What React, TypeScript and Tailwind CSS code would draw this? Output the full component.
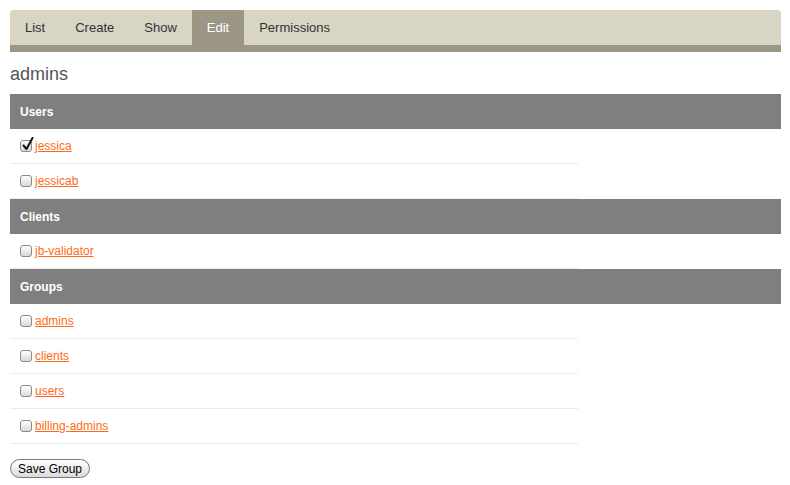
import React from 'react'

const tabs = ['List', 'Create', 'Show', 'Edit', 'Permissions']

const sections = [
  { title: 'Users', items: [{ name: 'jessica', checked: true }, { name: 'jessicab' }] },
  { title: 'Clients', items: [{ name: 'jb-validator' }] },
  {
    title: 'Groups',
    items: [{ name: 'admins' }, { name: 'clients' }, { name: 'users' }, { name: 'billing-admins' }],
  },
]

function Checkbox({ checked }: { checked?: boolean }) {
  return (
    <span className="relative inline-block w-[12px] h-[12px] mr-[3px] rounded-[3px] border border-[#8a8a8a] bg-gradient-to-b from-[#ffffff] to-[#d9d9d9] shadow-[inset_0_1px_0_#fff]">
      {checked && (
        <svg className="absolute -top-[4px] left-[1px]" width="12" height="14" viewBox="0 0 12 14">
          <path d="M1.5 8.5 L4.5 12 L10.5 1" fill="none" stroke="#111" strokeWidth="2" strokeLinecap="round" strokeLinejoin="round" />
        </svg>
      )}
    </span>
  )
}

export default function App() {
  return (
    <div className="bg-white w-[790px] h-[485px] pl-[10px] pr-[9px] pt-[10px] font-['Liberation_Sans',Arial,sans-serif] text-[#333]">
      {/* tab bar */}
      <div className="bg-[#d8d5c4] rounded-t-[4px] border-b-[7px] border-[#9b9784] flex h-[42px]">
        {tabs.map((t) => (
          <div
            key={t}
            className={
              t === 'Edit'
                ? 'px-[15px] h-[35px] flex items-center text-[13px] bg-[#9b9784] text-white'
                : 'px-[15px] h-[35px] flex items-center text-[13px] text-[#333]'
            }
          >
            {t}
          </div>
        ))}
      </div>

      <h2 className="text-[18px] leading-[22px] text-[#555] pt-[11px] pb-[9px]">admins</h2>

      {sections.map((s) => (
        <div key={s.title}>
          <div className="bg-[#7f7f7f] h-[35px] flex items-center px-[10px] text-white font-bold text-[12px]">
            {s.title}
          </div>
          {s.items.map((it) => (
            <div
              key={it.name}
              className="w-[568px] h-[35px] border-b border-[#ebebeb] flex items-center pl-[10px] text-[12px]"
            >
              <Checkbox checked={it.checked} />
              <a href="#" className="text-[#ff6a1a] underline">
                {it.name}
              </a>
            </div>
          ))}
        </div>
      ))}

      <button className="mt-[15px] h-[19px] px-[7px] rounded-full border border-[#777] bg-gradient-to-b from-[#ffffff] to-[#dcdcdc] text-[12px] text-black leading-none font-['Liberation_Sans',Arial,sans-serif]">
        Save Group
      </button>
    </div>
  )
}
